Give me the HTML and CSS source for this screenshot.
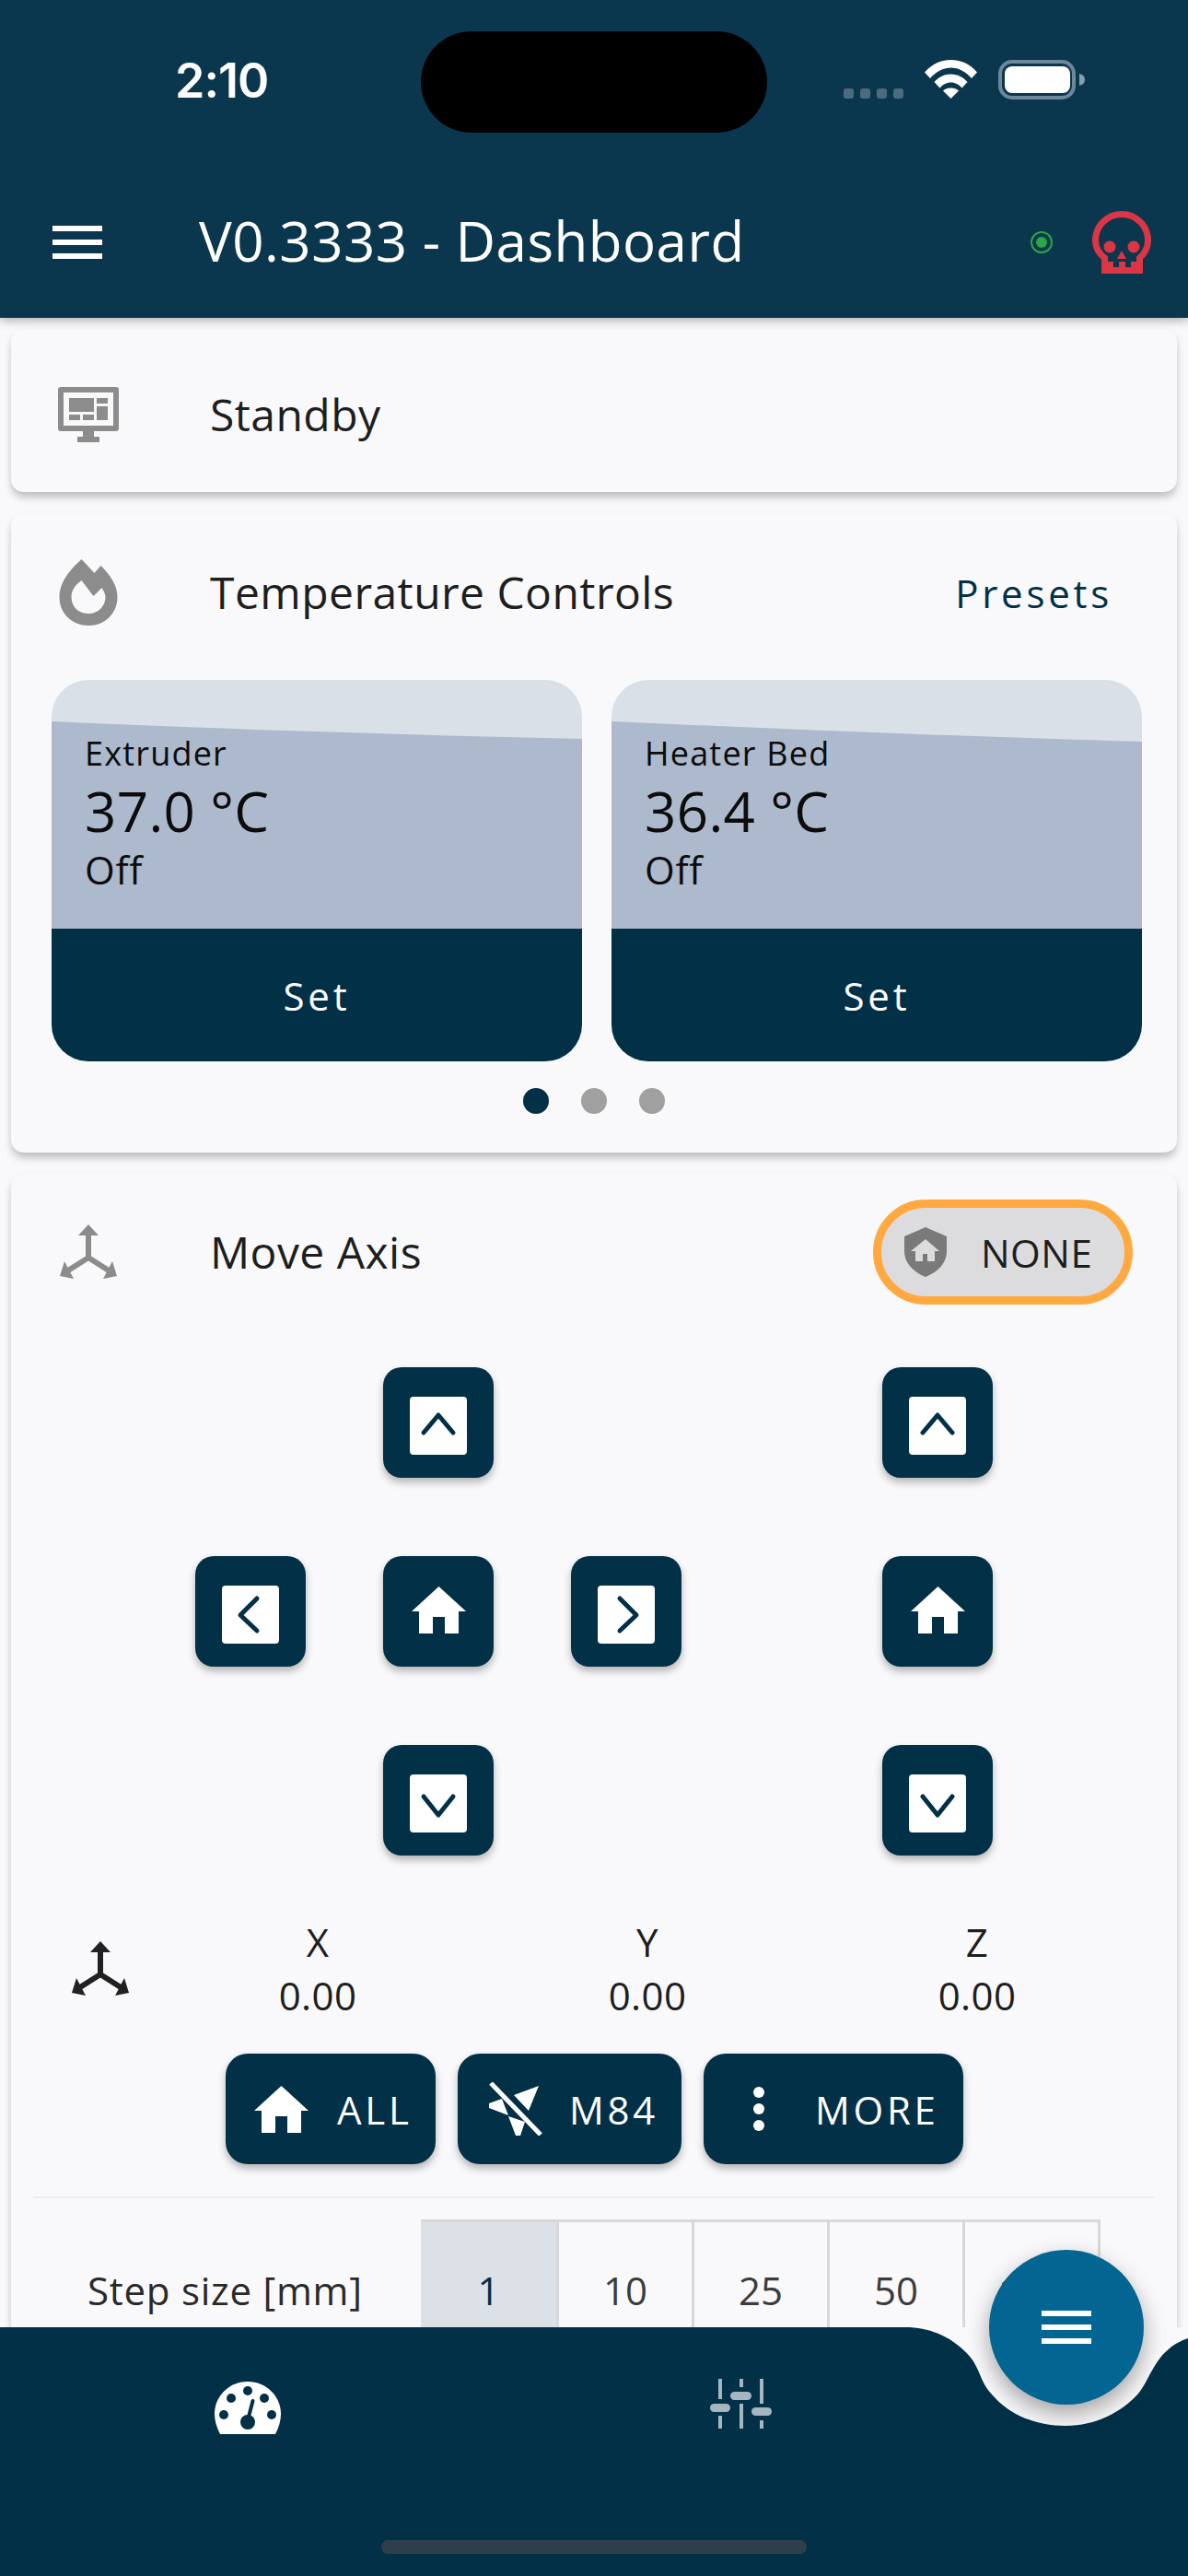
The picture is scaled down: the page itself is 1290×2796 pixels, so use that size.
FILE: index.html
```html
<!DOCTYPE html>
<html lang="en">
<head>
  <meta charset="UTF-8">
  <title>V0.3333 - Dashboard</title>
  <link rel="stylesheet" href="styles.css">
</head>
<body>

<svg class="icon-defs" aria-hidden="true">
  <symbol id="home" viewBox="0 0 59 51">
    <path fill="currentColor" d="M29.5 0L59 27H51V51H36V33H23V51H8V27H0Z"/>
  </symbol>
  <symbol id="axes" viewBox="0 0 62 60">
    <path fill="currentColor" d="M31 0L42 12H20ZM0 56L5 40L15 59ZM62 56L57 40L47 59Z"/>
    <path fill="none" stroke="currentColor" stroke-width="6" d="M31 10V37M9 50L31 36L53 50"/>
  </symbol>
  <symbol id="up" viewBox="0 0 62 63">
    <rect width="62" height="63" rx="4" fill="#fff"/>
    <path fill="none" stroke="#023047" stroke-width="5" stroke-linecap="round" stroke-linejoin="round" d="M15 39L31 20L47 39"/>
  </symbol>
  <symbol id="down" viewBox="0 0 62 63">
    <rect width="62" height="63" rx="4" fill="#fff"/>
    <path fill="none" stroke="#023047" stroke-width="5" stroke-linecap="round" stroke-linejoin="round" d="M15 24L31 44L47 24"/>
  </symbol>
  <symbol id="left" viewBox="0 0 62 63">
    <rect width="62" height="63" rx="4" fill="#fff"/>
    <path fill="none" stroke="#023047" stroke-width="5" stroke-linecap="round" stroke-linejoin="round" d="M38 14L20 32L38 49"/>
  </symbol>
  <symbol id="right" viewBox="0 0 62 63">
    <rect width="62" height="63" rx="4" fill="#fff"/>
    <path fill="none" stroke="#023047" stroke-width="5" stroke-linecap="round" stroke-linejoin="round" d="M24 14L42 32L24 49"/>
  </symbol>
</svg>

<div class="screen">

  <header class="app-header">
    <div class="status-bar">
      <span class="clock">2:10</span>
      <div class="island"></div>
      <svg class="status-icons" width="262" height="43" viewBox="0 0 262 43">
        <g fill="#4c6b7e">
          <rect x="0" y="31" width="11" height="11" rx="3"/>
          <rect x="18" y="31" width="11" height="11" rx="3"/>
          <rect x="36" y="31" width="11" height="11" rx="3"/>
          <rect x="54" y="31" width="11" height="11" rx="3"/>
        </g>
        <g transform="translate(88 0)" fill="#fff">
          <path d="M0 13.5C7 5 17 0 28.5 0S50 5 57 13.5L51 20C45 13 37 8.5 28.5 8.5S12 13 6 20Z"/>
          <path d="M10.5 24C15 19 21 15.5 28.5 15.5S42 19 46.5 24L40.5 30.5C37.5 27 33.5 24.5 28.5 24.5S19.5 27 16.5 30.5Z"/>
          <path d="M20 33.5C22 31.5 25 30.5 28.5 30.5S35 31.5 37 33.5L28.5 42Z"/>
        </g>
        <rect x="170" y="2" width="80" height="39" rx="13" fill="none" stroke="#6d8899" stroke-width="4"/>
        <rect x="175" y="7" width="71" height="29" rx="8" fill="#fff"/>
        <path d="M256 15C260 16 262 18 262 21.500S260 27 256 28Z" fill="#86a0b0"/>
      </svg>
    </div>
    <div class="title-bar">
      <svg class="menu-icon" width="54" height="36" viewBox="0 0 54 36">
        <path fill="#fff" d="M0 0H54V6H0ZM0 15H54V21H0ZM0 30H54V36H0Z"/>
      </svg>
      <h1 class="page-title">V0.3333 - Dashboard</h1>
      <svg class="socket-dot" width="24" height="24" viewBox="0 0 24 24">
        <circle cx="12" cy="12" r="11" fill="none" stroke="#28a745" stroke-width="2"/>
        <circle cx="12" cy="12" r="6" fill="#28a745"/>
      </svg>
      <svg class="skull" width="64" height="68" viewBox="0 0 64 68">
        <path fill="none" stroke="#dc3545" stroke-width="7" d="M13.500 58V51C7 46 3.500 40 3.500 32A28.500 28.500 0 0 1 60.500 32C60.500 40 57 46 51.500 51V58"/>
        <path fill="#dc3545" d="M10 55H23V61H29V55H36V61H42V55H55V68H10Z"/>
        <circle cx="19" cy="39" r="6.500" fill="#dc3545"/>
        <circle cx="45" cy="39" r="6.500" fill="#dc3545"/>
        <path fill="#dc3545" d="M32 43L37 52H27Z"/>
      </svg>
    </div>
  </header>

  <main class="content">

    <section class="card card-standby">
      <div class="card-head">
        <svg class="head-icon" width="66" height="60" viewBox="0 0 66 60">
          <path fill="#8c8c8c" fill-rule="evenodd" d="M3 0H63A3 3 0 0 1 66 3V45A3 3 0 0 1 63 48H39V54H45V60H21V54H27V48H3A3 3 0 0 1 0 45V3A3 3 0 0 1 3 0ZM6 6V42H60V6Z"/>
          <path fill="#8c8c8c" d="M12 12H39V27H12ZM42 12H54V18H42ZM42 21H54V36H42ZM12 30H24V36H12ZM27 30H39V36H27Z"/>
        </svg>
        <span class="head-title">Standby</span>
      </div>
    </section>

    <section class="card card-temps">
      <div class="card-head">
        <svg class="head-icon" width="66" height="72" viewBox="-1.500 0 66 72">
          <path fill="#8c8c8c" fill-rule="evenodd" d="M24 0L38 15L45 7C55 17 63 28 63 41C63 59 49 72 32 72C14 72 0 59 0 41C0 24 13 10 24 0ZM24 23C17 28 13 34 13 41C13 52 21 59 32 59C42 59 50 51 50 41C50 38 48 34 46 31L37 40Z"/>
        </svg>
        <span class="head-title">Temperature Controls</span>
        <a class="presets-link">Presets</a>
      </div>

      <div class="tiles">
        <div class="tile">
          <div class="tile-gauge">
            <svg class="tile-wave" width="576" height="270" viewBox="0 0 576 270">
              <path fill="#adb9cc" d="M0 45C200 54 400 60 576 64V270H0Z"/>
            </svg>
            <div class="tile-name">Extruder</div>
            <div class="tile-temp">37.0 °C</div>
            <div class="tile-state">Off</div>
          </div>
          <div class="tile-set">Set</div>
        </div>
        <div class="tile">
          <div class="tile-gauge">
            <svg class="tile-wave" width="576" height="270" viewBox="0 0 576 270">
              <path fill="#adb9cc" d="M0 45C200 54 400 62 576 67V270H0Z"/>
            </svg>
            <div class="tile-name">Heater Bed</div>
            <div class="tile-temp">36.4 °C</div>
            <div class="tile-state">Off</div>
          </div>
          <div class="tile-set">Set</div>
        </div>
      </div>

      <div class="pager">
        <span class="pager-dot is-active"></span>
        <span class="pager-dot"></span>
        <span class="pager-dot"></span>
      </div>
    </section>

    <section class="card card-move">
      <div class="card-head">
        <svg class="head-icon icon-grey" width="62" height="60"><use href="#axes"/></svg>
        <span class="head-title">Move Axis</span>
        <div class="home-pill">
          <svg width="46" height="54" viewBox="0 0 46 54">
            <path fill="#7a7a7a" d="M23 0L46 10V26C46 39 36 49 23 54C10 49 0 39 0 26V10Z"/>
            <path fill="#dcdcde" d="M23 13L38 26H33V37H25V29H20V37H12V26H7Z"/>
          </svg>
          <span>NONE</span>
        </div>
      </div>

      <div class="jog">
        <div class="jog-xy">
          <button class="jog-btn jog-top"><svg width="62" height="63"><use href="#up"/></svg></button>
          <button class="jog-btn jog-left"><svg width="62" height="63"><use href="#left"/></svg></button>
          <button class="jog-btn jog-center is-home"><svg width="59" height="51"><use href="#home"/></svg></button>
          <button class="jog-btn jog-right"><svg width="62" height="63"><use href="#right"/></svg></button>
          <button class="jog-btn jog-bottom"><svg width="62" height="63"><use href="#down"/></svg></button>
        </div>
        <div class="jog-z">
          <button class="jog-btn"><svg width="62" height="63"><use href="#up"/></svg></button>
          <button class="jog-btn is-home"><svg width="59" height="51"><use href="#home"/></svg></button>
          <button class="jog-btn"><svg width="62" height="63"><use href="#down"/></svg></button>
        </div>
      </div>

      <div class="position">
        <svg class="position-icon" width="62" height="60"><use href="#axes"/></svg>
        <div class="position-col"><div>X</div><div>0.00</div></div>
        <div class="position-col"><div>Y</div><div>0.00</div></div>
        <div class="position-col"><div>Z</div><div>0.00</div></div>
      </div>

      <div class="actions">
        <button class="action-btn btn-all">
          <svg width="59" height="51"><use href="#home"/></svg>
          <span>ALL</span>
        </button>
        <button class="action-btn btn-m84">
          <svg width="59" height="58" viewBox="0 0 59 58">
            <path fill="#fff" d="M28 14L55 4L44 31ZM1 23L15 18L22 36L1 28ZM22 37L30 58H35L40 43Z"/>
            <path fill="none" stroke="#fff" stroke-width="5" d="M3 1L57 57"/>
          </svg>
          <span>M84</span>
        </button>
        <button class="action-btn btn-more">
          <svg width="12" height="48" viewBox="0 0 12 48">
            <circle cx="6" cy="6" r="6" fill="#fff"/>
            <circle cx="6" cy="24" r="6" fill="#fff"/>
            <circle cx="6" cy="42" r="6" fill="#fff"/>
          </svg>
          <span>MORE</span>
        </button>
      </div>

      <hr class="divider">

      <div class="steps">
        <span class="steps-label">Step size [mm]</span>
        <div class="steps-group">
          <span class="step is-active">1</span>
          <span class="step">10</span>
          <span class="step">25</span>
          <span class="step">50</span>
          <span class="step">100</span>
        </div>
      </div>
    </section>

  </main>

  <nav class="bottom-nav">
    <svg class="nav-shape" width="1290" height="270" viewBox="0 0 1290 270">
      <path fill="#023047" d="M0 0H983C1020 0 1045 20 1057 37C1066 52 1066 62 1078 74C1096 95 1125 107 1157 107C1190 107 1218 92 1236 72C1250 56 1254 24 1290 12V270H0Z"/>
    </svg>
    <svg class="nav-item" width="72" height="57" viewBox="0 0 72 57">
      <path fill="#fff" d="M6 57C2 49 0 42 0 35C0 16 16 0 36 0C56 0 72 16 72 35C72 42 70 49 66 57Z"/>
      <g fill="#023047">
        <circle cx="36" cy="10" r="5"/>
        <circle cx="18" cy="18" r="5"/>
        <circle cx="54" cy="18" r="5"/>
        <circle cx="10" cy="36" r="5"/>
        <circle cx="62" cy="36" r="5"/>
        <circle cx="36" cy="44" r="8"/>
      </g>
      <path fill="none" stroke="#023047" stroke-width="4" stroke-linecap="round" d="M36 42L41.500 21"/>
    </svg>
    <svg class="nav-item nav-sliders" width="67" height="54" viewBox="0 0 67 54">
      <g fill="#a6b6c0">
        <rect x="9" y="0" width="4" height="22"/>
        <rect x="0" y="27" width="22" height="9" rx="4.500"/>
        <rect x="9" y="40" width="4" height="14"/>
        <rect x="32" y="0" width="4" height="9"/>
        <rect x="22" y="14" width="23" height="9" rx="4.500"/>
        <rect x="32" y="27" width="4" height="27"/>
        <rect x="54" y="0" width="4" height="27"/>
        <rect x="45" y="31" width="22" height="9" rx="4.500"/>
        <rect x="54" y="45" width="4" height="9"/>
      </g>
    </svg>
    <button class="fab">
      <svg width="54" height="36" viewBox="0 0 54 36">
        <path fill="#fff" d="M0 0H54V6H0ZM0 15H54V21H0ZM0 30H54V36H0Z"/>
      </svg>
    </button>
    <div class="home-bar"></div>
  </nav>

</div>

</body>
</html>
```

FILE: styles.css
```css
* {
  box-sizing: border-box;
}

body {
  margin: 0;
  font-family: "Open Sans", "Noto Sans", sans-serif;
  color: #1e1e1e;
  background: #f9f9fb;
}

button {
  border: none;
  padding: 0;
  font: inherit;
}

svg {
  display: block;
  flex: none;
}

.icon-defs {
  position: absolute;
  width: 0;
  height: 0;
}

.screen {
  display: flex;
  flex-direction: column;
  width: 1290px;
  height: 2796px;
  overflow: hidden;
}

/* header */

.app-header {
  position: relative;
  z-index: 2;
  flex: none;
  height: 345px;
  background: #0b374e;
  box-shadow: 0 3px 10px rgba(0,0,0,0.3);
  color: white;
}

.status-bar {
  display: flex;
  height: 180px;
}

.clock {
  width: 266px;
  margin-left: 190px;
  padding-top: 56px;
  font-family: Inter, sans-serif;
  font-size: 52px;
  font-weight: 600;
  line-height: 63px;
  letter-spacing: -1px;
}

.island {
  width: 376px;
  height: 110px;
  margin: 34px 0 0 1px;
  border-radius: 55px;
  background: black;
}

.status-icons {
  margin: 65px 0 0 83px;
}

.title-bar {
  display: flex;
  align-items: center;
  height: 165px;
  padding-left: 57px;
}

.page-title {
  flex: 1;
  margin: 0 0 3px 105px;
  font-size: 60px;
  font-weight: 400;
  line-height: 80px;
  letter-spacing: 0.500px;
}

.socket-dot {
  margin-right: 43px;
}

.skull {
  margin-right: 40px;
}

/* cards */

.content {
  flex: 1;
  min-height: 0;
  padding: 12px 12px 0;
  overflow: hidden;
}

.card {
  margin-bottom: 23px;
  padding-top: 29px;
  border-radius: 14px;
  background: #f9f9fb;
  box-shadow: 0 6px 10px -1px rgba(0,0,0,0.26);
}

.card-standby {
  height: 177px;
  padding-top: 36px;
}

.card-move {
  padding-top: 28px;
}

.card-head {
  display: flex;
  align-items: center;
  height: 114px;
  padding-left: 51px;
}

.head-icon {
  margin-right: 99px;
  color: #8c8c8c;
}

.icon-grey {
  margin-left: 2px;
  margin-right: 101px;
}

.head-title {
  flex: 1;
  font-size: 48px;
  line-height: 66px;
  letter-spacing: 0.450px;
}

.presets-link {
  margin-right: 70px;
  font-size: 42px;
  letter-spacing: 3.750px;
  color: #023047;
}

.home-pill {
  display: flex;
  align-items: center;
  width: 282px;
  height: 114px;
  margin-right: 48px;
  padding-left: 25px;
  border: 9px solid #ffa940;
  border-radius: 57px;
  background: #dcdcde;
  font-size: 42px;
  letter-spacing: 0.500px;
}

.home-pill span {
  margin-left: 37px;
}

/* temperature tiles */

.tiles {
  display: flex;
  gap: 32px;
  margin-top: 38px;
  padding-left: 44px;
}

.tile {
  width: 576px;
  height: 414px;
  overflow: hidden;
  border-radius: 40px;
  background: #d9e0e8;
}

.tile-gauge {
  position: relative;
  height: 270px;
  padding: 55px 0 0 36px;
  color: #0c0c0c;
}

.tile-wave {
  position: absolute;
  top: 0;
  left: 0;
}

.tile-name,
.tile-temp,
.tile-state {
  position: relative;
}

.tile-name {
  font-size: 36px;
  line-height: 50px;
  letter-spacing: 1.200px;
}

.tile-temp {
  font-size: 60px;
  line-height: 74px;
  letter-spacing: 0.400px;
}

.tile-state {
  font-size: 42px;
  line-height: 54px;
  letter-spacing: 0.750px;
}

.tile-set {
  height: 144px;
  background: #023047;
  color: white;
  font-size: 42px;
  line-height: 146px;
  letter-spacing: 3.750px;
  text-align: center;
}

.pager {
  display: flex;
  justify-content: center;
  gap: 35px;
  margin-top: 29px;
  padding-bottom: 42px;
}

.pager-dot {
  width: 28px;
  height: 28px;
  border-radius: 50%;
  background: #a0a0a0;
}

.pager-dot.is-active {
  background: #023047;
}

/* jog buttons */

.jog {
  display: flex;
  margin-top: 68px;
  padding-left: 200px;
}

.jog-xy {
  display: grid;
  grid-template-columns: repeat(3, 120px);
  grid-template-rows: repeat(3, 120px);
  gap: 85px 84px;
}

.jog-z {
  display: grid;
  grid-template-rows: repeat(3, 120px);
  gap: 85px;
  margin-left: 218px;
}

.jog-btn {
  display: flex;
  align-items: center;
  justify-content: center;
  width: 120px;
  height: 120px;
  padding-top: 6px;
  border-radius: 20px;
  background: #023047;
  color: white;
  box-shadow: 0 5px 8px rgba(0,0,0,0.28);
}

.jog-btn.is-home {
  padding: 0 0 4px;
}

.jog-top { grid-area: 1 / 2; }
.jog-left { grid-area: 2 / 1; }
.jog-center { grid-area: 2 / 2; }
.jog-right { grid-area: 2 / 3; }
.jog-bottom { grid-area: 3 / 2; }

/* position readout */

.position {
  display: flex;
  align-items: center;
  margin-top: 65px;
  padding-left: 66px;
}

.position-icon {
  margin-right: 26px;
  color: #212121;
}

.position-col {
  width: 358px;
  font-size: 42px;
  line-height: 58px;
  letter-spacing: 0.400px;
  text-align: center;
}

/* action buttons */

.actions {
  display: flex;
  gap: 24px;
  margin-top: 34px;
  padding-left: 233px;
}

.action-btn {
  display: flex;
  align-items: center;
  height: 120px;
  border-radius: 24px;
  background: #023047;
  color: white;
  font-size: 42px;
  letter-spacing: 3.750px;
  box-shadow: 0 5px 8px rgba(0,0,0,0.28);
}

.btn-all {
  width: 228px;
  padding-left: 31px;
}

.btn-all span {
  margin-left: 31px;
}

.btn-m84 {
  width: 243px;
  padding-left: 33px;
}

.btn-m84 span {
  margin-left: 29px;
}

.btn-more {
  width: 282px;
  padding-left: 54px;
}

.btn-more span {
  margin-left: 55px;
}

.divider {
  height: 2px;
  margin: 35px 24px 0;
  border: none;
  background: #ebebed;
}

/* step size */

.steps {
  display: flex;
  margin-top: 23px;
  padding-left: 83px;
}

.steps-label {
  width: 362px;
  font-size: 42px;
  line-height: 154px;
  letter-spacing: 0.750px;
  color: #2a2a2a;
}

.steps-group {
  display: flex;
  height: 160px;
  border-top: 3px solid #d8d8db;
  border-right: 3px solid #d8d8db;
}

.step {
  width: 147px;
  border-left: 3px solid #d8d8db;
  font-size: 42px;
  line-height: 148px;
  text-align: center;
  color: #3c3c3c;
}

.step.is-active {
  border-left: none;
  background: #dce1e8;
  color: #023047;
}

/* bottom navigation */

.bottom-nav {
  position: relative;
  z-index: 3;
  display: flex;
  flex: none;
  height: 270px;
  padding: 59px 0 0 233px;
  background: #f9f9fb;
}

.nav-shape {
  position: absolute;
  top: 0;
  left: 0;
}

.nav-item {
  position: relative;
}

.nav-sliders {
  margin: -3px 0 0 466px;
}

.fab {
  position: absolute;
  top: -84px;
  right: 48px;
  display: flex;
  align-items: center;
  justify-content: center;
  width: 168px;
  height: 168px;
  border-radius: 50%;
  background: #026592;
  box-shadow: 0 10px 24px rgba(0,0,0,0.35);
}

.home-bar {
  position: absolute;
  top: 231px;
  left: 414px;
  width: 462px;
  height: 15px;
  border-radius: 8px;
  background: #2e3f4b;
}
```
